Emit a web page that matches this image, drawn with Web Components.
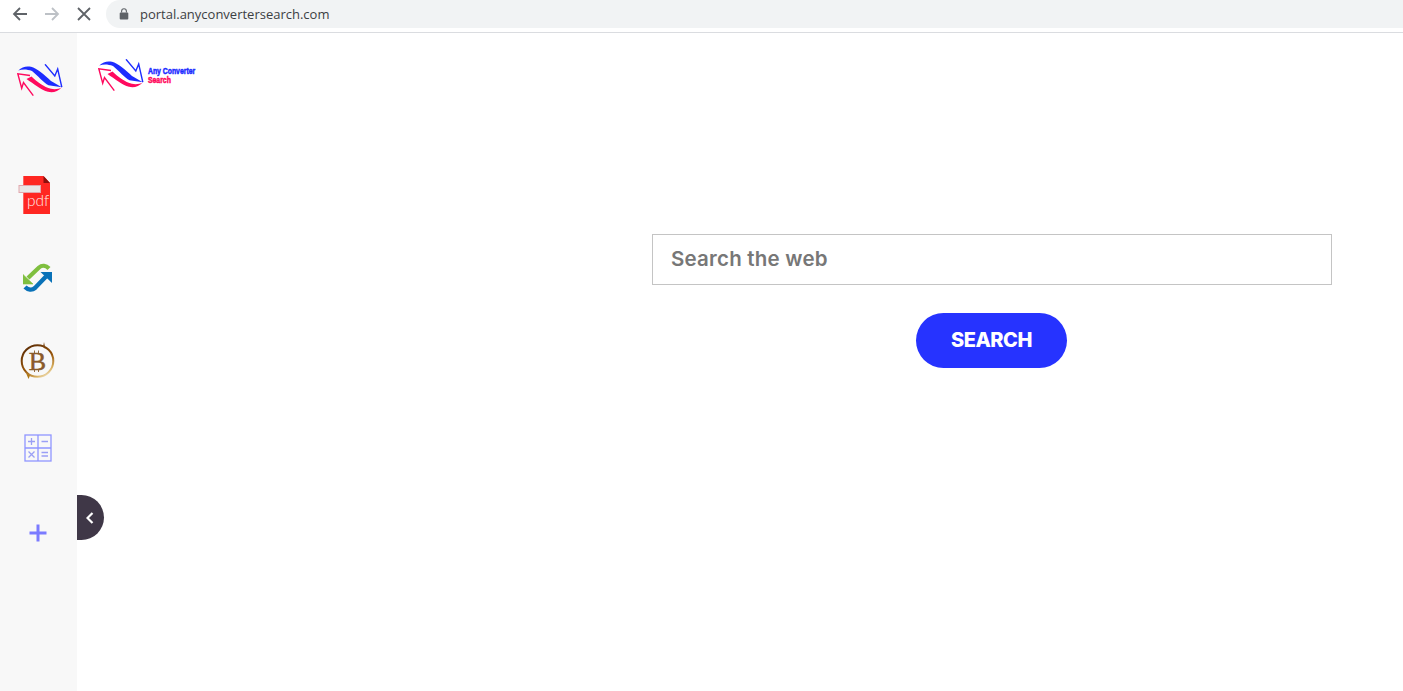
<!DOCTYPE html>
<html><head><meta charset="utf-8"><style>
html,body{margin:0;padding:0;background:#fff;height:100%;overflow:hidden}
</style></head><body>
<app-shell>
  <browser-bar slot="bar" url="portal.anyconvertersearch.com"></browser-bar>
  <side-rail slot="rail"></side-rail>
  <brand-logo slot="main" labelled></brand-logo>
  <search-panel slot="main"></search-panel>
</app-shell>
<script>
const def=(n,html)=>customElements.define(n,class extends HTMLElement{
  constructor(){super();this.attachShadow({mode:'open'}).innerHTML=html(this)}
});
def('app-shell',()=>`<style>
:host{display:flex;flex-direction:column;width:1403px;height:691px;position:relative;overflow:hidden}
.row{display:flex;flex:1;min-height:0}
.rail{flex:0 0 77px;display:flex}
.main{flex:1;display:flex;flex-direction:column;min-width:0;position:relative}
</style>
<slot name="bar"></slot>
<div class="row"><div class="rail"><slot name="rail"></slot></div><div class="main"><slot name="main"></slot></div></div>`);

def('browser-bar',(h)=>`<style>
:host{display:flex;align-items:flex-start;height:32px;border-bottom:1px solid #dadce0;background:#fff;flex:none}
.nav{display:flex;height:28px;align-items:center;width:106px;flex:none}
svg{display:block;flex:none}
.pill{flex:1;height:28px;background:#f1f3f4;border-radius:14px 0 0 14px;display:flex;align-items:center;padding-left:13px;gap:11px}
.url{font:13px "Open Sans","Liberation Sans",sans-serif;color:#3c4043}
</style>
<div class="nav">
<svg style="margin-left:12px" width="16" height="16" viewBox="0 0 16 16" fill="none" stroke="#5f6368" stroke-width="1.8"><path d="M15 8H2M8 2 2 8l6 6"/></svg>
<svg style="margin-left:16px" width="16" height="16" viewBox="0 0 16 16" fill="none" stroke="#bdc1c6" stroke-width="1.8"><path d="M1 8h13M8 2l6 6-6 6"/></svg>
<svg style="margin-left:17px" width="14" height="14" viewBox="0 0 14 14" fill="none" stroke="#5f6368" stroke-width="1.8"><path d="M1 1l12 12M13 1 1 13"/></svg>
</div>
<div class="pill">
<svg width="10" height="12" viewBox="0 0 10 12"><path d="M2.6 4.5V3.2a2.4 2.4 0 0 1 4.8 0v1.3" fill="none" stroke="#5f6368" stroke-width="1.1"/><rect x="0.7" y="4.4" width="8.6" height="7" rx="1" fill="#5f6368"/></svg>
<span class="url">${h.getAttribute('url')}</span></div>`);

const arrows=`<path fill="#1d2cff" d="M1.300 6.500C5 2.500 10 1.800 14 2.800 20 4.500 27 10.500 34 17L44.800 23.200 31.500 21.200C27 19 21 12 15 7 10 5 5 5 1.300 6.500Z"/>
<path fill="none" stroke="#1d2cff" stroke-width="1.400" d="M28 .3 37.800 12 40.700 5 44.800 23.200"/>
<path fill="#ff0a5e" d="M9.500 15 14.500 12.500C20 18 27 23 34 24.800 38 25.600 42 25 44.700 23.500 41 27.500 36 29 31 27.800 24 26 17 20 9.500 15Z"/>
<path fill="none" stroke="#ff0a5e" stroke-width="1.400" d="M13 11.500 .8 9.800 4.700 24.300 6.500 18.500 16.300 31.700"/>`;
def('brand-logo',(h)=>`<style>
:host{display:flex;align-items:flex-start;flex:none;${h.hasAttribute('labelled')?'margin:26px 0 0 21px;height:36px;':''}}
svg{display:block;flex:none}
.t{margin:6.500px 0 0 4px;font:700 9.500px/9.500px "Liberation Sans",sans-serif;transform:scaleX(.72);transform-origin:0 0;white-space:nowrap;-webkit-text-stroke:.55px currentColor}
.a{color:#1d2cff}.b{color:#ff0a5e}
</style>
<svg width="46" height="34" viewBox="0 0 46 34">${arrows}</svg>
${h.hasAttribute('labelled')?'<div class="t"><div class="a">Any Converter</div><div class="b">Search</div></div>':''}`);

def('rail-icon',(h)=>`<style>
:host{display:flex;justify-content:center;align-items:center;flex:none;width:77px;height:${h.getAttribute('h')};margin-top:${h.getAttribute('mt')}}
</style><slot></slot>`);

def('side-rail',()=>`<style>
:host{display:flex;flex-direction:column;width:77px;background:#f8f8f8;position:relative;flex:none}
svg{display:block}
</style>
<rail-icon h="34px" mt="31px" style="padding-left:2px;box-sizing:border-box"><brand-logo></brand-logo></rail-icon>
<rail-icon h="38px" mt="78px">
<svg width="34" height="38" viewBox="0 0 34 38" style="margin-left:-7px"><path d="M5.300 0H25.500L32 7V38H5.300Z" fill="#ff2722"/><path d="M25.500 0 32 7H25.500Z" fill="#8c0f0c"/><rect x="1" y="9.500" width="21.500" height="7" fill="#e9e6e6" stroke="#e2a8ae" stroke-width="1"/><text x="9" y="29.700" font-size="15.500" fill="#ffe9e8" style="font-family:Lato,sans-serif;font-weight:300">pdf</text></svg></rail-icon>
<rail-icon h="30px" mt="49px">
<svg width="30" height="30" viewBox="0 0 30 30" fill="none" style="margin-left:-1px"><path d="M5 15 16 4.500C19 2 23 2.500 26 5.500" stroke="#7fbf3f" stroke-width="4.200"/><path d="M0 11.500V21H10Z" fill="#7fbf3f" stroke="#7fbf3f" stroke-width=".6"/><path d="M2 24C5 27 9 27.500 12 25L23 13.500" stroke="#0a72b8" stroke-width="4.400"/><path d="M17.500 9H29V20Z" fill="#0a72b8"/></svg></rail-icon>
<rail-icon h="38px" mt="49px">
<svg width="36" height="38" viewBox="0 0 36 38" fill="none" style="margin-left:-2px"><defs><linearGradient id="g" x1=".2" y1="0" x2=".8" y2="1"><stop offset="0" stop-color="#5e2e06"/><stop offset=".55" stop-color="#96540a"/><stop offset=".85" stop-color="#d8b060"/><stop offset="1" stop-color="#f3e6c8"/></linearGradient></defs>
<circle cx="17.500" cy="19" r="15.800" stroke="url(#g)" stroke-width="2"/><path d="M24 0 25.500 7 23 5Z" fill="#7a4410"/><path d="M6 31 8.500 37 10 33.500Z" fill="#b07818"/><text x="17.500" y="28" text-anchor="middle" font-size="26" fill="#8a5a2a" stroke="#8a5a2a" stroke-width=".5" style="font-family:'Liberation Serif',serif;font-weight:400">B</text><path d="M14.500 8.500V11M18.500 8.500V11M14.500 27V30M18.500 27V30" stroke="#8a5a2a" stroke-width=".9"/></svg></rail-icon>
<rail-icon h="28px" mt="54px">
<svg width="28" height="28" viewBox="0 0 28 28" fill="none" stroke="#8f95ff" stroke-width="1.300" style="margin-left:-2px"><rect x="1" y="1" width="26" height="26"/><path d="M14 1V27M1 14H27" /><path d="M4 7.500H11M7.500 4V11M17.500 7.500H24M4.500 17.500 10.500 23.500M10.500 17.500 4.500 23.500M17.500 18.500H24M17.500 22H24" stroke="#9a9ff5"/></svg></rail-icon>
<rail-icon h="18px" mt="62px">
<svg width="18" height="18" viewBox="0 0 18 18" style="margin-left:-2px"><path d="M9 .5V17.500M.5 9H17.500" stroke="#7b7bff" stroke-width="3"/></svg></rail-icon>
<collapse-tab></collapse-tab>`);

def('collapse-tab',()=>`<style>
:host{position:absolute;left:77px;top:462px;width:27px;height:45px;background:#3f3747;border-radius:0 23px 23px 0;display:flex;align-items:center;justify-content:center}
svg{display:block}
</style><svg width="8" height="12" viewBox="0 0 8 12" fill="none" stroke="#fff" stroke-width="2.200" style="margin-left:-2px"><path d="M6.500 1 1.500 6l5 5"/></svg>`);

def('search-panel',()=>`<style>
:host{display:flex;flex-direction:column;align-items:flex-start;width:680px;margin:139px 0 0 575px;flex:none}
.box{box-sizing:border-box;width:680px;height:51px;border:1px solid #c4c4c4;display:flex;align-items:center;padding-left:18px;background:#fff;
font:600 20.500px Inter,"Open Sans",sans-serif;color:#777;letter-spacing:.22px;padding-bottom:2px}
button{all:unset;box-sizing:border-box;width:151px;height:55px;margin:28px 0 0 264px;border-radius:28px;background:#2633ff;color:#fff;text-align:center;
font:800 20px/55px Inter,"Open Sans",sans-serif;letter-spacing:-.5px}
</style><div class="box">Search the web</div><button>SEARCH</button>`);
</script>
</body></html>
